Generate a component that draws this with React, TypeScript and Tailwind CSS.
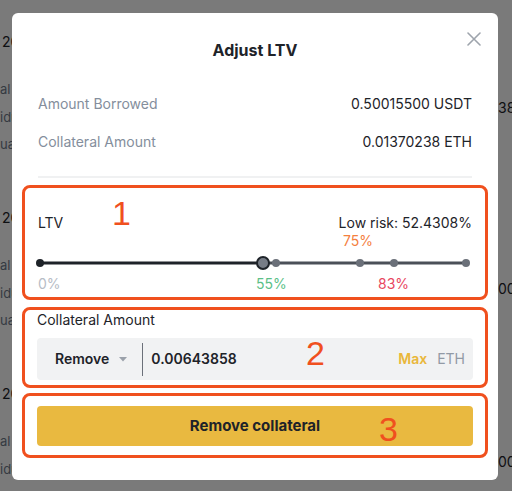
const font = { fontFamily: "Inter, 'Noto Sans', sans-serif" };

const groups = [0, 1, 2];

function Background() {
  return (
    <div className="flex h-full w-full justify-between">
      <div className="flex flex-col pt-[32px] whitespace-nowrap">
        {groups.map((g) => (
          <div key={g} className="mb-[54px] flex flex-col">
            <div className="h-[20px] pl-[2px] text-[14px] leading-[20px] text-[#1e2329]">2022-06-14 10:21</div>
            <div className="mt-[27px] h-[20px] text-[13px] leading-[20px] text-[#707a8a]">al Daily Interest</div>
            <div className="mt-[8px] h-[20px] text-[13px] leading-[20px] text-[#707a8a]">idual Interest</div>
            <div className="mt-[7px] h-[20px] text-[13px] leading-[20px] text-[#707a8a]">
              {g === 2 ? (
                <span>
                  ual Interest: <span className="text-[#1e2329]">1 Days</span>
                </span>
              ) : (
                "ual Interest"
              )}
            </div>
          </div>
        ))}
      </div>
      <div className="flex w-[14px] flex-col overflow-hidden whitespace-nowrap text-[14px] leading-[20px] text-[#1e2329]">
        <div className="mt-[98px]">38</div>
        <div className="mt-[161px]">00</div>
        <div className="mt-[153px]">00</div>
      </div>
    </div>
  );
}

function Slider() {
  return (
    <svg width="438" height="20" viewBox="0 0 438 20" className="mt-[2px] ml-[-2px] block">
      <line x1="4" y1="10" x2="227" y2="10" stroke="#1e2329" strokeWidth="3" />
      <line x1="227" y1="10" x2="430" y2="10" stroke="#4b5058" strokeWidth="3" />
      <circle cx="4" cy="10" r="4" fill="#1e2329" />
      <circle cx="240" cy="10" r="4" fill="#6b7079" />
      <circle cx="324" cy="10" r="4" fill="#6b7079" />
      <circle cx="358" cy="10" r="4" fill="#6b7079" />
      <circle cx="430" cy="10" r="4" fill="#6b7079" />
      <circle cx="227" cy="10" r="6" fill="#767c86" stroke="#1e2329" strokeWidth="2" />
    </svg>
  );
}

const mark = "absolute text-[34px] leading-none text-[#f0501e]";
const markFont = { fontFamily: "'Liberation Sans', Arial, sans-serif" };

export default function App() {
  return (
    <div className="relative h-[491px] w-[512px] overflow-hidden bg-white" style={font}>
      <Background />
      <div className="absolute inset-0 bg-[rgba(0,0,0,0.52)]" />

      <div className="absolute left-[12px] top-[13px] flex w-[486px] flex-col rounded-[6px] bg-white pt-[25px] pb-[22px]">
        <div className="text-center text-[16px] font-bold leading-[24px] text-[#1e2329]">Adjust LTV</div>
        <svg className="absolute left-[455px] top-[19px]" width="14" height="14" viewBox="0 0 14 14">
          <path d="M1 1L13 13M13 1L1 13" stroke="#9ea4ac" strokeWidth="1.6" strokeLinecap="round" />
        </svg>

        <div className="flex flex-col px-[26px] text-[14px] leading-[20px]">
          <div className="mt-[32px] flex justify-between">
            <span className="text-[#848e9c]">Amount Borrowed</span>
            <span className="text-[#1e2329]">0.50015500 USDT</span>
          </div>
          <div className="mt-[18px] flex justify-between">
            <span className="text-[#848e9c]">Collateral Amount</span>
            <span className="text-[#1e2329]">0.01370238 ETH</span>
          </div>
          <div className="mt-[24px] h-[2px] bg-[#f0f1f2]" />
        </div>

        <div className="flex flex-col px-[10px] text-[14px] leading-[20px]">
          {/* box 1 */}
          <div className="relative mt-[7px] flex flex-col rounded-[8px] border-[3px] border-[#f0501e] px-[13px] pt-[25px] pb-[3px]">
            <span className={mark} style={{ ...markFont, left: 87, top: 8 }}>1</span>
            <div className="flex justify-between text-[#1e2329]">
              <span>LTV</span>
              <span>Low risk: 52.4308%</span>
            </div>
            <div className="relative mt-[-2px] h-[20px]">
              <span className="absolute left-[305px] text-[#f5803e]">75%</span>
            </div>
            <Slider />
            <div className="relative mt-[1px] h-[20px]">
              <span className="absolute left-0 text-[#b7bdc6]">0%</span>
              <span className="absolute left-[218px] text-[#5cbf88]">55%</span>
              <span className="absolute left-[340px] text-[#e8475f]">83%</span>
            </div>
          </div>

          {/* box 2 */}
          <div className="relative mt-[7px] flex flex-col rounded-[8px] border-[3px] border-[#f0501e] px-[12px] pb-[5px]">
            <span className={mark} style={{ ...markFont, left: 281, top: 26 }}>2</span>
            <span className="text-[#1e2329]">Collateral Amount</span>
            <div className="mt-[8px] flex h-[42px] items-center rounded-[4px] bg-[#f1f2f3] pl-[18px] pr-[8px]">
              <span className="font-semibold text-[#1e2329]">Remove</span>
              <svg className="ml-[10px]" width="8" height="5" viewBox="0 0 8 5">
                <path d="M0 0H8L4 4.5Z" fill="#9ba1aa" />
              </svg>
              <div className="ml-[15px] h-[33px] w-px bg-[#6b7079]" />
              <span className="ml-[8px] flex-1 text-[14px] font-semibold text-[#1e2329]">0.00643858</span>
              <span className="font-semibold text-[#e9b73a]">Max</span>
              <span className="ml-[10px] text-[#929aa5]">ETH</span>
            </div>
          </div>

          {/* box 3 */}
          <div className="relative mt-[5px] flex flex-col rounded-[8px] border-[3px] border-[#f0501e] px-[12px] pt-[10px] pb-[9px]">
            <span className={mark} style={{ ...markFont, left: 354, top: 16 }}>3</span>
            <div className="flex h-[40px] items-center justify-center rounded-[4px] bg-[#e9b940] text-[15px] font-bold text-[#1e2329]">
              Remove collateral
            </div>
          </div>
        </div>
      </div>
    </div>
  );
}
